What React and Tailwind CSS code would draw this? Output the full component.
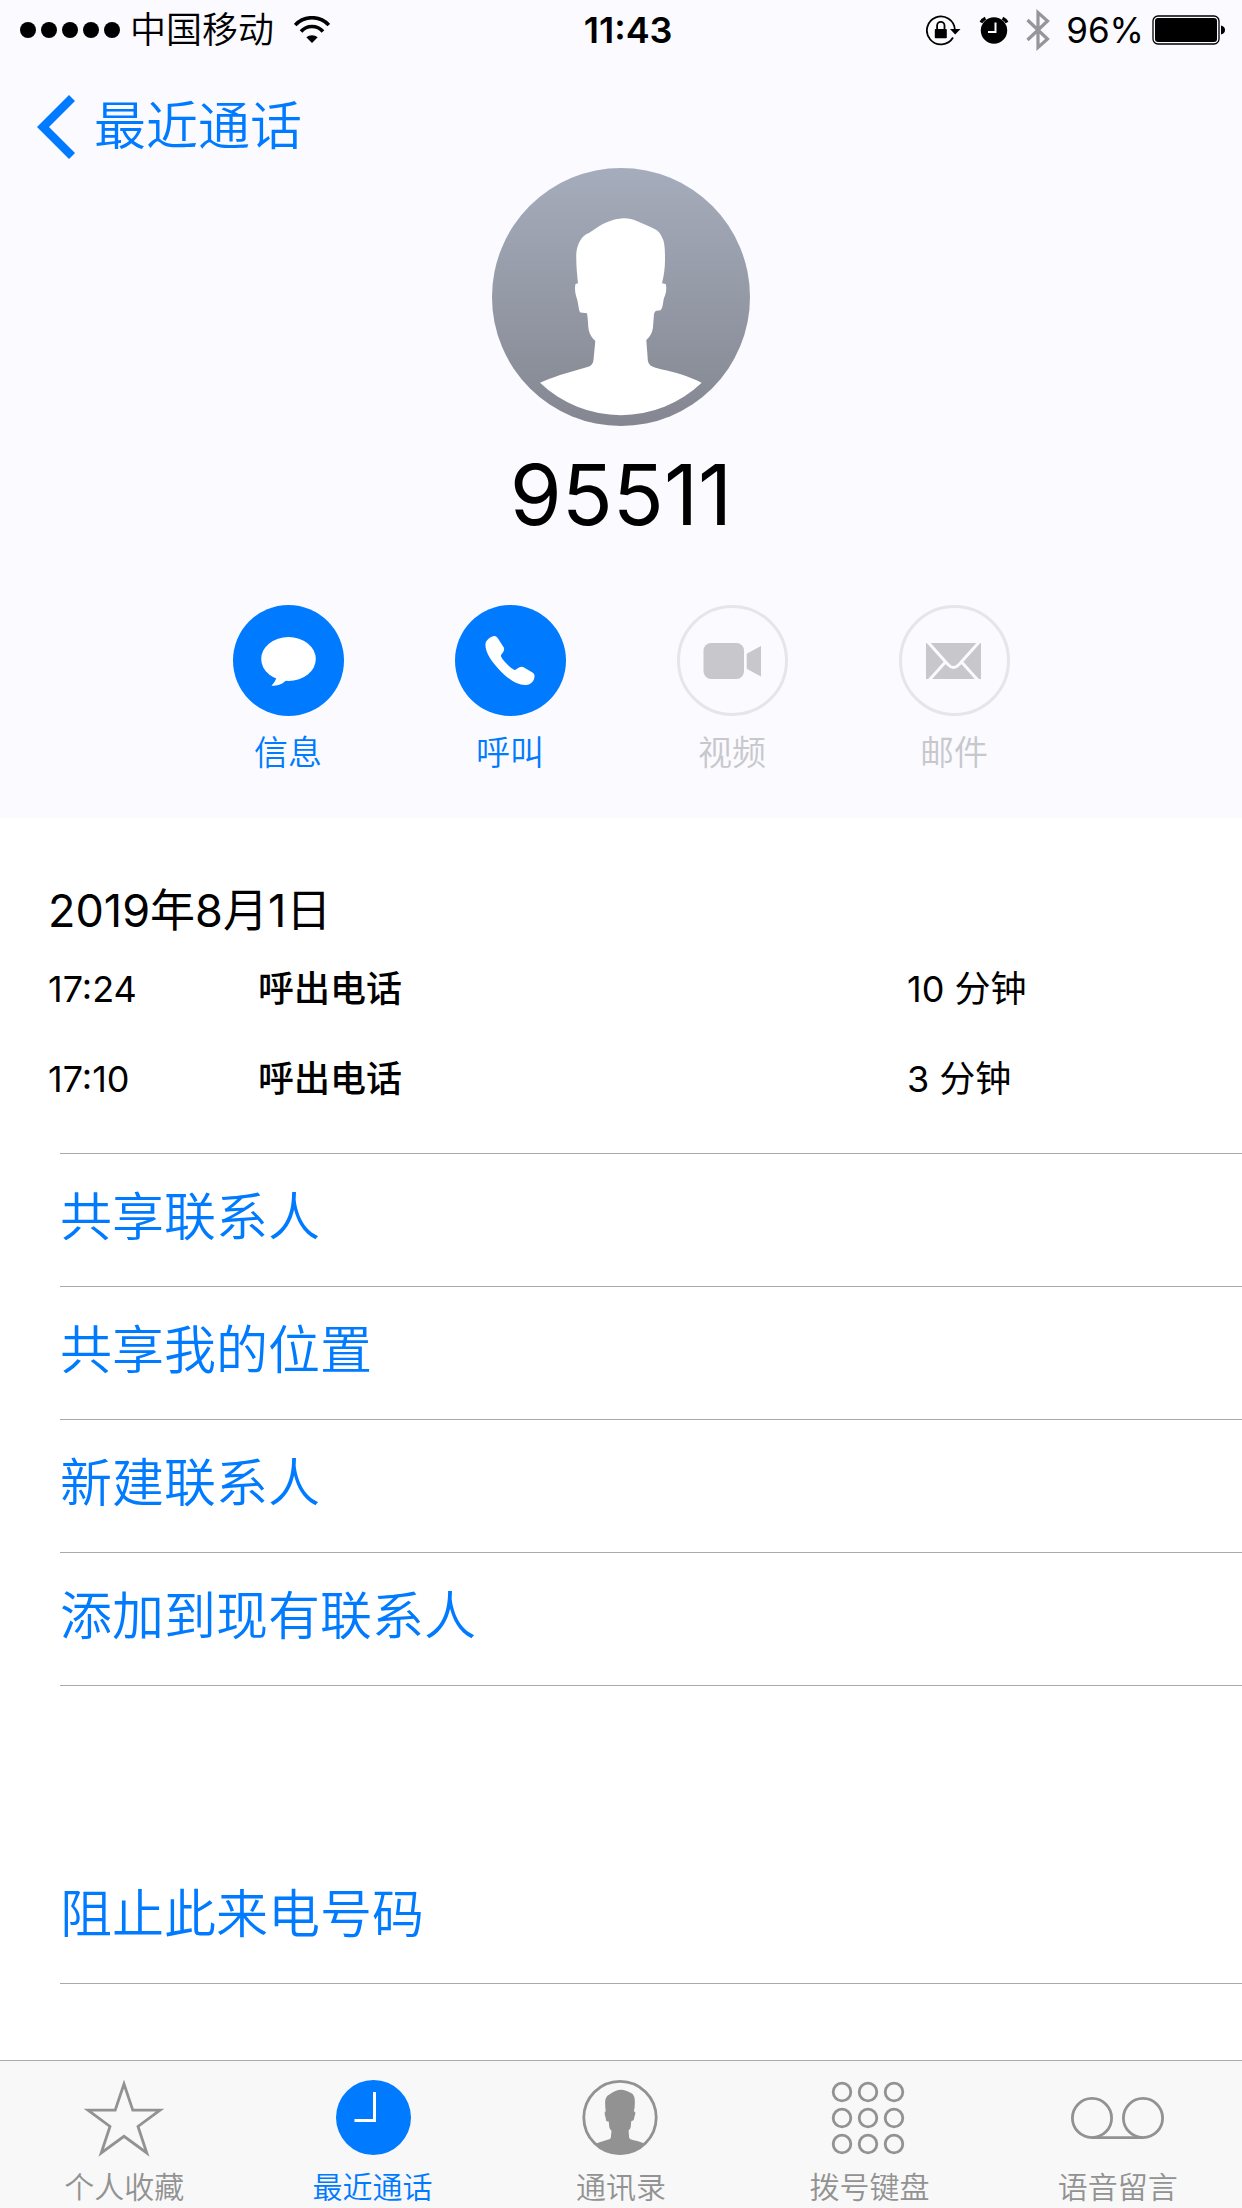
import React from "react";

const HEAD_PATH = "M131 50.3C121 51 112 55 104.7 59.7L97 65C90 67 85 76 84.3 85.3C84 96 85 106 86 115.3L83.5 116C82 122 84 128 85.3 132C86.5 137 87 144 88.5 144.5L95 145.3C96 151 96 157 96.7 162C98 167 100 170 103.3 173L101.5 192C101 196 99 198 96.3 198.7L68 207C61 209.5 54 212 48 214.7A117 117 0 0 0 209.7 214.7C196 208 183 204 170 201.5C165 200 160 199 158 197C156 195 155.6 192 155.6 189L154.3 172C158 169 160 165 160.9 160.3L162 146C162.5 144 163.5 143 164.5 142.8L168.5 142.2C171 140 171 134 172 130C174 126 175 120 173.7 116L170 115.3C172 107 173 100 173 92C173 84 173 78 171.3 72C169 67 167 63 163 61.3C157 58 151 56 144.7 53C140 51 136 50 131 50.3Z";

const actions = [
    {label: '信息', icon: 'message', enabled: true},
    {label: '呼叫', icon: 'call', enabled: true},
    {label: '视频', icon: 'video', enabled: false},
    {label: '邮件', icon: 'mail', enabled: false},
];

const calls = [
    {time: '17:24', type: '呼出电话', duration: '10 分钟'},
    {time: '17:10', type: '呼出电话', duration: '3 分钟'},
];

const options = ['共享联系人', '共享我的位置', '新建联系人', '添加到现有联系人'];

const tabs = [
    {label: '个人收藏', icon: 'star'},
    {label: '最近通话', icon: 'clock', active: true},
    {label: '通讯录', icon: 'contacts'},
    {label: '拨号键盘', icon: 'keypad'},
    {label: '语音留言', icon: 'voicemail'},
];

function StatusBar(){
    return (
    <div className="flex h-15 items-center justify-between pl-5 pr-4 text-[36px] text-black">
      <div className="flex items-center">
        <div className="flex gap-[5px]">
          {[1, 2, 3, 4, 5].map((n) => (
            <span key={n} className="size-4 rounded-full bg-black" />
          ))}
        </div>
        <span className="ml-2.5 font-[350]">中国移动</span>
        <svg className="ml-5 h-7 w-9" viewBox="0 0 36 28" fill="none" stroke="#000" strokeWidth="3.6">
          <path d="M1.2 9A23 23 0 0 1 34.8 9" />
          <path d="M7 15.5A14.6 14.6 0 0 1 29 15.5" />
          <path d="M12.3 21.2A9 9 0 0 1 23.7 21.2L18 27Z" fill="#000" stroke="none" />
        </svg>
      </div>
      <span className="font-semibold">11:43</span>
      <div className="flex items-center">
        <svg className="h-8 w-9" viewBox="0 0 36 32" fill="none" stroke="#000" strokeWidth="1.8">
          <path d="M27 23.5A14 14 0 1 1 28.9 16" />
          <path d="M24 15H34.5L29.2 20.5Z" fill="#000" stroke="none" />
          <rect x="8.8" y="15" width="12" height="9.2" rx="0.8" fill="#000" stroke="none" />
          <path d="M11.1 15.5V11.5A3.7 3.7 0 0 1 18.5 11.5V15.5" />
        </svg>
        <svg className="ml-4 h-8 w-8" viewBox="0 0 32 32">
          <circle cx="16" cy="16.5" r="13.2" fill="#000" />
          <path d="M3 8.5A9 9 0 0 1 7.5 4.2M24.5 4.2A9 9 0 0 1 29 8.5" fill="none" stroke="#000" strokeWidth="3.2" />
          <path d="M17.5 8.5V18H10" fill="none" stroke="#fafaff" strokeWidth="2" />
        </svg>
        <svg className="ml-4 h-11 w-6" viewBox="0 0 24 44" fill="none" stroke="#95959a" strokeWidth="3.2">
          <path d="M1.5 12L21.5 31L12 39.5V4.5L21.5 13L1.5 32" />
        </svg>
        <span className="ml-4 text-[35px]">96%</span>
        <svg className="ml-2 h-8 w-[74px]" viewBox="0 0 74 32">
          <rect x="1" y="2" width="66" height="28" rx="5" fill="none" stroke="#000" strokeWidth="1.3" />
          <rect x="3" y="4" width="62" height="24" rx="3" fill="#000" />
          <path d="M69 11.5C72 12 73 14 73 16C73 18 72 20 69 20.5Z" fill="#000" />
        </svg>
      </div>
    </div>
    )
}

function ActionIcon({ name }){
    if(name === 'message'){
        return (
        <svg className="size-full" viewBox="0 0 111 111">
          <circle cx="55.5" cy="55.5" r="55.5" fill="#007aff" />
          <ellipse cx="55.5" cy="54" rx="27.3" ry="22" fill="#fff" />
          <path d="M43.5 71C43.5 75 41 78 38.5 80.5C44 81.5 50 79 54 74.5Z" fill="#fff" />
        </svg>
        )
    }
    if(name === 'call'){
        return (
        <svg className="size-full" viewBox="0 0 111 111">
          <circle cx="55.5" cy="55.5" r="55.5" fill="#007aff" />
          <path d="M30.5 38.5C31 35 36 31.2 39.5 31C41 31 42 32 43 33.5L48.5 42C49.5 43.5 49.2 45 48.5 46.5C47 49 45.5 50 46 51.5C49 57 54 61.5 59 64.8C60.5 65.5 62 63.5 64 62.5C66 61.5 67.5 61.5 69 62.5L77.5 67.5C79 68.5 79.6 69.5 79.5 71.5C79.5 75.5 76 79.8 71 80C62 80.5 52 73 44.5 65C37 57 29.5 47 30.5 38.5Z" fill="#fff" />
        </svg>
        )
    }
    if(name === 'video'){
        return (
        <svg className="size-full" viewBox="0 0 111 111" fill="#c7c7cc">
          <circle cx="55.5" cy="55.5" r="54" fill="none" stroke="#e5e5ea" strokeWidth="3" />
          <rect x="26.5" y="38" width="40.5" height="36" rx="7.5" />
          <path d="M84 41V71.5L71 64.5C70 64 69.7 63.5 69.7 62.5V50C69.7 49 70 48.5 71 48Z" />
        </svg>
        )
    }
    return (
    <svg className="size-full" viewBox="0 0 111 111">
      <circle cx="55.5" cy="55.5" r="54" fill="none" stroke="#e5e5ea" strokeWidth="3" />
      <rect x="27" y="38" width="55" height="36" fill="#c7c7cc" />
      <path d="M27 35L49 59.5Q54.5 65.5 60 59.5L82 35M28.5 77L46 57.5M80.5 77L63 57.5" fill="none" stroke="#fafaff" strokeWidth="3" />
    </svg>
    )
}

function TabIcon({ name }){
    if(name === 'star'){
        return (
        <svg className="h-20 w-20" viewBox="0 0 80 80" fill="none" stroke="#929292" strokeWidth="2.8">
          <path d="M40 6L48.8 32.2H76L54 48.5L62.8 75L40 58.3L17.2 75L26 48.5L4 32.2H31.2Z" />
        </svg>
        )
    }
    if(name === 'clock'){
        return (
        <svg className="h-20 w-20" viewBox="0 0 80 80">
          <circle cx="40.5" cy="39.5" r="37.5" fill="#007aff" />
          <path d="M41.5 14V42.5H21.5" fill="none" stroke="#fff" strokeWidth="3" />
        </svg>
        )
    }
    if(name === 'contacts'){
        return (
        <svg className="h-20 w-20" viewBox="0 0 80 80">
          <clipPath id="contact-clip"><circle cx="39" cy="39.5" r="37" /></clipPath>
          <g clipPath="url(#contact-clip)">
            <path d={HEAD_PATH} transform="translate(-4.1 -5.2) scale(.335)" fill="#929292" />
          </g>
          <circle cx="39" cy="39.5" r="36.2" fill="none" stroke="#929292" strokeWidth="2.8" />
        </svg>
        )
    }
    if(name === 'keypad'){
        return (
        <svg className="h-20 w-20" viewBox="0 0 80 80" fill="none" stroke="#929292" strokeWidth="2.8">
          {[14, 40, 66].map((y) => [13, 39, 65].map((x) => (
            <circle key={x + '-' + y} cx={x} cy={y} r="8.8" />
          )))}
        </svg>
        )
    }
    return (
    <svg className="h-20 w-24" viewBox="0 0 96 80" fill="none" stroke="#929292" strokeWidth="2.8">
      <circle cx="22" cy="40" r="19.6" />
      <circle cx="73" cy="40" r="19.6" />
      <path d="M22 59.6H73" />
    </svg>
    )
}

function App(){
    return (
    <div lang="zh-CN" className="flex min-h-screen flex-col bg-white font-['Inter','Noto_Sans_CJK_SC',sans-serif] text-black">
      <header className="bg-[#fafaff] pb-[45px]">
        <StatusBar />
        <nav className="px-9 pb-[9px] pt-[35px]">
          <button className="flex h-16 items-center gap-[18px] text-[52px] font-[350] leading-16 text-[#007aff]">
            <svg className="h-16 w-10" viewBox="-1 0 40 64" fill="#007aff">
              <path d="M0 32L32 0L38 6L12 32L38 58L32 64Z" />
            </svg>
            最近通话
          </button>
        </nav>
        <svg className="mx-auto size-[258px]" viewBox="0 0 258 258">
          <linearGradient id="avatar-bg" x1="0" y1="0" x2="0" y2="1">
            <stop offset="0" stopColor="#a5acbb" />
            <stop offset="1" stopColor="#848791" />
          </linearGradient>
          <circle cx="129" cy="129" r="129" fill="url(#avatar-bg)" />
          <path d={HEAD_PATH} fill="#fff" />
        </svg>
        <h1 className="mt-[29px] text-center text-[84px] leading-20">95511</h1>
        <div className="mx-auto mt-[70px] grid w-full max-w-[888px] grid-cols-4">
          {actions.map((a) => (
            <button key={a.label} disabled={!a.enabled} className={`flex flex-col items-center gap-[17px] text-[34px] font-[350] leading-10 ${a.enabled ? 'text-[#007aff]' : 'text-[#c7c7cc]'}`}>
              <span className="size-[111px]"><ActionIcon name={a.icon} /></span>
              {a.label}
            </button>
          ))}
        </div>
      </header>

      <main>
        <section className="pl-12 pt-[63px]">
          <h2 className="text-[45px] leading-15">2019年8月1日</h2>
          <table className="mt-[3px] w-full table-fixed text-left text-[36px]">
            <tbody>
              {calls.map((c) => (
                <tr key={c.time} className="h-[90px]">
                  <td className="w-[210px]">{c.time}</td>
                  <td className="font-medium">{c.type}</td>
                  <td className="w-[335px]">{c.duration}</td>
                </tr>
              ))}
            </tbody>
          </table>
        </section>
        <ul className="ml-15 mt-[29px] border-t border-[#aaaaaa] text-[52px] font-[350] text-[#007aff]">
          {options.map((o) => (
            <li key={o} className="border-b border-[#aaaaaa]">
              <button className="block h-[132px] w-full pb-1 text-left">{o}</button>
            </li>
          ))}
        </ul>
        <div className="ml-15 mt-[165px] border-b border-[#aaaaaa] text-[52px] font-[350] text-[#007aff]">
          <button className="block h-[132px] w-full pb-1 text-left">阻止此来电号码</button>
        </div>
      </main>

      <nav className="mt-auto flex border-t border-[#aaaaaa] bg-[#f8f8f8] pt-[17px]">
        {tabs.map((t) => (
          <a key={t.label} href="#" className={`flex flex-1 flex-col items-center gap-[9px] pb-px text-[30px] font-[350] leading-10 ${t.active ? 'text-[#007aff]' : 'text-[#929292]'}`}>
            <TabIcon name={t.icon} />
            {t.label}
          </a>
        ))}
      </nav>
    </div>
    )
};

export default App;
